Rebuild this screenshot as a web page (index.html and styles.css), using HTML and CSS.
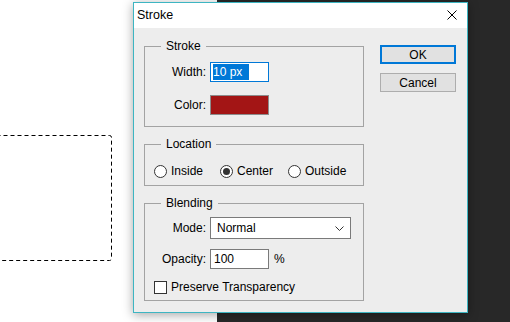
FILE: index.html
```html
<!DOCTYPE html>
<html lang="en">
  <head>
    <meta charset="UTF-8" />
    <meta name="viewport" content="width=device-width, initial-scale=1.0" />
    <title>Stroke</title>
    <link rel="stylesheet" href="styles.css">
  </head>
  <body>
    <div class="doc">
      <svg class="marquee" width="132" height="127" viewBox="0 0 132 127">
        <rect x="0.5" y="0.5" width="131" height="125" rx="2" fill="none" stroke="#000" stroke-dasharray="4 3" />
      </svg>
    </div>
    <div class="workspace"></div>

    <div class="dialog">
      <div class="titlebar">
        <span class="title">Stroke</span>
        <svg class="close" width="10" height="10" viewBox="0 0 10 10">
          <path d="M0.5 0.5 L9.5 9.5 M9.5 0.5 L0.5 9.5" stroke="#000" stroke-width="1" fill="none" />
        </svg>
      </div>

      <div class="dialog-body">
        <div class="groups">
          <fieldset class="group group-stroke">
            <legend>Stroke</legend>
            <div class="row">
              <label class="label">Width:</label>
              <div class="input focused"><span class="selected">10 px</span></div>
            </div>
            <div class="row row-color">
              <label class="label">Color:</label>
              <div class="swatch"></div>
            </div>
          </fieldset>

          <fieldset class="group group-location">
            <legend>Location</legend>
            <div class="radios">
              <div class="option"><span class="radio"></span>Inside</div>
              <div class="option"><span class="radio checked"></span>Center</div>
              <div class="option"><span class="radio"></span>Outside</div>
            </div>
          </fieldset>

          <fieldset class="group group-blending">
            <legend>Blending</legend>
            <div class="row">
              <label class="label">Mode:</label>
              <div class="select">
                <span>Normal</span>
                <svg width="9" height="5" viewBox="0 0 9 5">
                  <path d="M0.5 0.5 L4.5 4.5 L8.5 0.5" stroke="#333" stroke-width="1" fill="none" />
                </svg>
              </div>
            </div>
            <div class="row row-opacity">
              <label class="label">Opacity:</label>
              <div class="input">100</div>
              <span class="unit">%</span>
            </div>
            <div class="check-row">
              <span class="checkbox"></span>Preserve Transparency
            </div>
          </fieldset>
        </div>

        <div class="buttons">
          <button class="btn btn-default">OK</button>
          <button class="btn">Cancel</button>
        </div>
      </div>
    </div>
  </body>
</html>
```

FILE: styles.css
```css
body {
  margin: 0;
  height: 100vh;
  display: flex;
  font-family: "Liberation Sans", Arial, sans-serif;
  font-size: 12px;
  color: #000;
  overflow: hidden;
}
.doc {
  position: relative;
  width: 217px;
  background-color: #fff;
}
.marquee {
  position: absolute;
  left: -20px;
  top: 135px;
}
.workspace {
  flex: 1;
  background-color: #282828;
}

.dialog {
  position: absolute;
  left: 133px;
  top: 2px;
  width: 333px;
  height: 309px;
  border: 1px solid #3db5c2;
  background-color: #ededed;
  box-shadow: 0 2px 10px rgba(0, 0, 0, 0.35);
}
.titlebar {
  height: 25px;
  background-color: #fff;
  display: flex;
  align-items: center;
  justify-content: space-between;
  padding: 0 10px 0 3px;
}
.title {
  font-size: 12.5px;
  line-height: 16px;
  margin-top: -1px;
}
.close {
  margin-top: -2px;
}

.dialog-body {
  display: flex;
  gap: 16px;
  padding: 10px 11px 0 10px;
}
.groups {
  width: 220px;
  display: flex;
  flex-direction: column;
  gap: 9px;
}
.group {
  margin: 0;
  padding: 0 9px;
  border: 1px solid #a3a3a3;
  min-width: 0;
}
.group legend {
  margin-left: 7px;
  padding: 0 5px;
  line-height: 16px;
}
.group-stroke {
  padding-top: 8px;
  padding-bottom: 11px;
}
.group-location {
  padding-top: 9px;
  padding-bottom: 4px;
}
.group-blending {
  padding-top: 6px;
  padding-bottom: 6px;
}

.row {
  display: grid;
  grid-template-columns: 52px auto auto;
  justify-content: start;
  align-items: center;
  column-gap: 4px;
}
.row-color {
  margin-top: 13px;
}
.row-opacity {
  margin-top: 10px;
}
.label {
  text-align: right;
}

.input {
  box-sizing: border-box;
  width: 59px;
  height: 20px;
  border: 1px solid #7a7a7a;
  background-color: #fff;
  padding: 0 3px;
  line-height: 18px;
}
.input.focused {
  border-color: #0078d7;
  padding: 1px 2px;
  line-height: 16px;
}
.selected {
  display: inline-block;
  background-color: #0078d7;
  color: #fff;
  padding-right: 7px;
}
.swatch {
  box-sizing: border-box;
  width: 59px;
  height: 20px;
  border: 1px solid #8c8c8c;
  background-color: #a31515;
}
.unit {
  margin-left: 1px;
}

.select {
  box-sizing: border-box;
  width: 141px;
  height: 22px;
  border: 1px solid #7a7a7a;
  background-color: #fff;
  display: flex;
  align-items: center;
  justify-content: space-between;
  padding: 0 6px 0 6px;
}

.radios {
  display: grid;
  grid-template-columns: 66px 68px auto;
  height: 20px;
  align-items: center;
}
.option {
  display: flex;
  align-items: center;
  gap: 4px;
}
.radio {
  box-sizing: border-box;
  width: 13px;
  height: 13px;
  border: 1px solid #333;
  border-radius: 50%;
  background-color: #fff;
  display: flex;
  align-items: center;
  justify-content: center;
}
.radio.checked::after {
  content: "";
  width: 7px;
  height: 7px;
  border-radius: 50%;
  background-color: #333;
}

.check-row {
  margin-top: 11px;
  height: 14px;
  display: flex;
  align-items: center;
  gap: 4px;
}
.checkbox {
  box-sizing: border-box;
  width: 13px;
  height: 13px;
  border: 1px solid #333;
  background-color: #fff;
}

.buttons {
  display: flex;
  flex-direction: column;
  gap: 9px;
  padding-top: 7px;
}
.btn {
  box-sizing: border-box;
  width: 76px;
  height: 19px;
  padding: 0;
  border: 1px solid #adadad;
  background-color: #e1e1e1;
  font-family: inherit;
  font-size: 12px;
  color: #000;
  line-height: 16px;
}
.btn-default {
  border: 2px solid #0078d7;
}
```
